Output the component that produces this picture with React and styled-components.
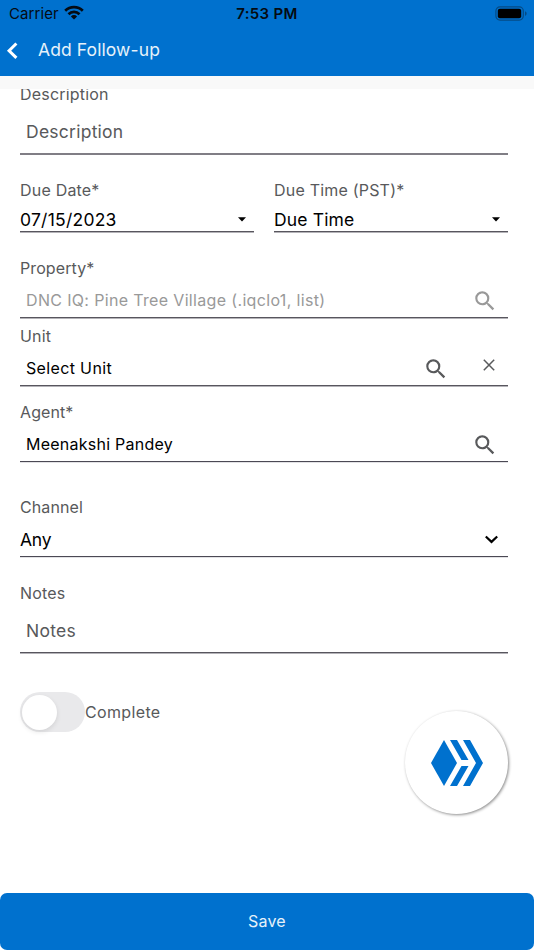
import styled, { createGlobalStyle } from 'styled-components';

const GlobalStyle = createGlobalStyle`
    * {
        box-sizing: border-box;
    }
    body {
        margin: 0;
        background: #fff;
        font-family: Inter, 'Liberation Sans', sans-serif;
    }
`;

const Screen = styled.div`
    display: flex;
    flex-direction: column;
    width: 534px;
    height: 950px;
    overflow: hidden;
    position: relative;
`;

const Header = styled.header`
    height: 76px;
    flex: none;
    background: #0071ce;
`;

const StatusBar = styled.div`
    display: grid;
    grid-template-columns: 1fr auto 1fr;
    align-items: center;
    height: 28px;
    padding: 0 7px 0 9px;
    color: #050b12;
`;

const Carrier = styled.div`
    display: flex;
    align-items: center;
    gap: 5px;
    margin-top: -1px;
    font-size: 15px;
    letter-spacing: 0.1px;
`;

const Wifi = styled.svg`
    margin-top: -2px;
`;

const Time = styled.div`
    font-size: 15px;
    font-weight: 600;
    letter-spacing: 0.3px;
    margin: -1px 2px 0 0;
`;

const Battery = styled.svg`
    justify-self: end;
    margin-top: -2px;
`;

const TitleBar = styled.div`
    display: flex;
    align-items: center;
    height: 44px;
    padding-left: 5px;
    color: #fff;
`;

const Title = styled.h1`
    margin: -2px 0 0 20px;
    font-size: 17.5px;
    font-weight: 400;
    letter-spacing: 0.1px;
    color: #e6f1fa;
`;

const Strip = styled.div`
    height: 13px;
    flex: none;
    background: #f9f9f9;
`;

const Form = styled.main`
    flex: 1;
    overflow: hidden;
    padding: 0 26px 0 20px;
`;

const Field = styled.div`
    flex: 1;
    margin-top: ${({ $top }) => $top}px;
`;

const Columns = styled.div`
    display: flex;
    gap: 20px;
`;

const Label = styled.label`
    display: block;
    height: 22px;
    line-height: 22px;
    font-size: 16px;
    letter-spacing: ${({ $spacing }) => $spacing ?? 0.2}px;
    color: #58595b;
    white-space: nowrap;
`;

const Control = styled.div`
    display: flex;
    align-items: center;
    height: ${({ $height }) => $height}px;
    margin-top: ${({ $gap }) => $gap}px;
    padding-left: ${({ $inset }) => ($inset ? 6 : 0)}px;
    padding-right: ${({ $right }) => $right ?? 0}px;
    color: ${({ $color }) => $color || '#000'};
`;

const Value = styled.span`
    flex: 1;
    font-size: ${({ $size }) => $size || 17.5}px;
    letter-spacing: ${({ $spacing }) => $spacing ?? 0.25}px;
    white-space: nowrap;
`;

const Line = styled.div`
    height: 2px;
    background: linear-gradient(${({ $from }) => $from || '#58565e'} 50%, ${({ $to }) => $to || '#b4b3b8'} 50%);
`;

const Search = styled.svg`
    margin-top: 2px;
`;

const Clear = styled.svg`
    margin: -6px 0 0 34px;
`;

const ToggleRow = styled.div`
    display: flex;
    align-items: center;
    margin-top: 38px;
    height: 40px;
`;

const Toggle = styled.div`
    width: 65px;
    height: 40px;
    padding: 2.5px 2px;
    border-radius: 20px;
    background: #e9e9eb;
`;

const Knob = styled.div`
    width: 35px;
    height: 35px;
    border-radius: 50%;
    background: #fff;
    box-shadow: 0 2px 5px rgba(0, 0, 0, 0.1);
`;

const Fab = styled.button`
    position: absolute;
    right: 26px;
    bottom: 136px;
    display: flex;
    align-items: center;
    justify-content: center;
    width: 103px;
    height: 103px;
    padding: 0;
    border: 0;
    border-radius: 50%;
    background: #fff;
    box-shadow: 1px 1px 3px rgba(0, 0, 0, 0.45);
`;

const SaveButton = styled.button`
    flex: none;
    height: 57px;
    padding: 0 0 1px;
    border: 0;
    border-radius: 7px;
    background: #0071ce;
    color: #e6f1fa;
    font-family: inherit;
    font-size: 16px;
    letter-spacing: 0.2px;
`;

const SearchIcon = ({ color = '#58595b' }) => (
    <Search width="26" height="26" viewBox="0 0 24 24" fill={color}>
        <path d="M15.5 14h-.79l-.28-.27A6.471 6.471 0 0 0 16 9.5 6.5 6.5 0 1 0 9.5 16c1.61 0 3.09-.59 4.23-1.57l.27.28v.79l5 4.99L20.49 19l-4.99-5zm-6 0C7.01 14 5 11.99 5 9.5S7.01 5 9.5 5 14 7.01 14 9.5 11.99 14 9.5 14z" />
    </Search>
);

const Caret = () => (
    <svg width="8" height="5" viewBox="0 0 8 5">
        <path d="M0 .2h8L4 4.6z" />
    </svg>
);

const App = () => {
    return (
        <Screen>
            <GlobalStyle />
            <Header>
                <StatusBar>
                    <Carrier>
                        Carrier
                        <Wifi width="20" height="15" viewBox="0 0 20 15" fill="none" stroke="#050b12" strokeWidth="2.7">
                            <path d="M1.2 5.8a12.6 12.6 0 0 1 17.6 0" />
                            <path d="M4.5 9.2a7.8 7.8 0 0 1 11 0" />
                            <path d="M6.9 11.4a4.4 4.4 0 0 1 6.2 0L10 14.6z" fill="#050b12" stroke="none" />
                        </Wifi>
                    </Carrier>
                    <Time>7:53 PM</Time>
                    <Battery width="32" height="15" viewBox="0 0 32 15">
                        <rect x=".9" y=".9" width="27.4" height="13.2" rx="4" fill="none" stroke="#054b85" strokeWidth="1.2" />
                        <rect x="2.8" y="2.8" width="23.4" height="9.4" rx="2" fill="#000" />
                        <path d="M30 5.2c2.2.8 2.2 3.8 0 4.6z" fill="#054b85" />
                    </Battery>
                </StatusBar>
                <TitleBar>
                    <svg width="13" height="18" viewBox="0 0 13 18" fill="none" stroke="#fff" strokeWidth="3">
                        <path d="M11.4 2.5L4.1 9.7l7.3 7.2" />
                    </svg>
                    <Title>Add Follow-up</Title>
                </TitleBar>
            </Header>
            <Strip />
            <Form>
                <Field $top={-6}>
                    <Label>Description</Label>
                    <Control $height={43} $gap={5} $inset $color="#58595b">
                        <Value>Description</Value>
                    </Control>
                    <Line $from="#807e85" $to="#807e85" />
                </Field>

                <Columns>
                    <Field $top={24}>
                        <Label>Due Date*</Label>
                        <Control $height={23} $gap={7} $right={8}>
                            <Value>07/15/2023</Value>
                            <Caret />
                        </Control>
                        <Line />
                    </Field>
                    <Field $top={24}>
                        <Label>Due Time (PST)*</Label>
                        <Control $height={23} $gap={7} $right={8}>
                            <Value $spacing={0.15}>Due Time</Value>
                            <Caret />
                        </Control>
                        <Line />
                    </Field>
                </Columns>

                <Field $top={24}>
                    <Label $spacing={0.1}>Property*</Label>
                    <Control $height={34} $gap={4} $inset $right={10} $color="#999">
                        <Value $size={16} $spacing={0.34}>DNC IQ: Pine Tree Village (.iqclo1, list)</Value>
                        <SearchIcon color="#999" />
                    </Control>
                    <Line />
                </Field>

                <Field $top={6}>
                    <Label>Unit</Label>
                    <Control $height={34} $gap={4} $inset $right={13}>
                        <Value $size={16} $spacing={0.35}>Select Unit</Value>
                        <SearchIcon />
                        <Clear width="12" height="12" viewBox="0 0 12 12" stroke="#58595b" strokeWidth="1.5">
                            <path d="M.8.8l10.4 10.4M11.2.8L.8 11.2" />
                        </Clear>
                    </Control>
                    <Line />
                </Field>

                <Field $top={14}>
                    <Label $spacing={0.1}>Agent*</Label>
                    <Control $height={34} $gap={4} $inset $right={10}>
                        <Value $size={16}>Meenakshi Pandey</Value>
                        <SearchIcon />
                    </Control>
                    <Line $from="#4b4954" $to="#e2e2e5" />
                </Field>

                <Field $top={33}>
                    <Label $spacing={0.1}>Channel</Label>
                    <Control $height={30} $gap={6} $right={10}>
                        <Value $spacing={-0.2}>Any</Value>
                        <svg width="13" height="9" viewBox="0 0 13 9" fill="none" stroke="#000" strokeWidth="2.2">
                            <path d="M.8 1.5l5.7 5.4 5.7-5.4" />
                        </svg>
                    </Control>
                    <Control $height={2} $gap={0} />
                    <Line $from="#4b4954" $to="#e2e2e5" />
                </Field>

                <Field $top={24}>
                    <Label>Notes</Label>
                    <Control $height={43} $gap={5} $inset $color="#58595b">
                        <Value>Notes</Value>
                    </Control>
                    <Line />
                </Field>

                <ToggleRow>
                    <Toggle>
                        <Knob />
                    </Toggle>
                    <Label $spacing={0.35}>Complete</Label>
                </ToggleRow>
            </Form>
            <Fab>
                <svg width="52" height="46" viewBox="0 0 52 46" fill="#0071ce">
                    <path d="M13 0L26 23 13 46 0 23z" />
                    <path d="M19 0h7l11.5 20h-7zM30.5 26h7L26 46h-7z" />
                    <path d="M32 0h7l13 23-13 23h-7l13-23z" />
                </svg>
            </Fab>
            <SaveButton>Save</SaveButton>
        </Screen>
    );
};

export default App;
